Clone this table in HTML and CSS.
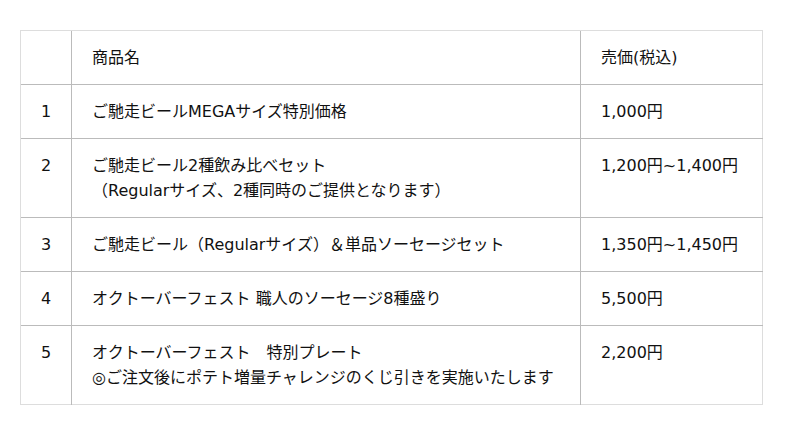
FILE: index.html
```html
<!DOCTYPE html>
<html lang="ja">
<head>
<meta charset="utf-8">
<link rel="stylesheet" href="styles.css">
</head>
<body>
<table class="menu">
  <colgroup>
    <col class="c-no">
    <col class="c-name">
    <col class="c-price">
  </colgroup>
  <tr>
    <td class="no"></td>
    <td>商品名</td>
    <td>売価(税込)</td>
  </tr>
  <tr>
    <td class="no">1</td>
    <td>ご馳走ビールMEGAサイズ特別価格</td>
    <td>1,000円</td>
  </tr>
  <tr>
    <td class="no">2</td>
    <td>ご馳走ビール2種飲み比べセット<br>（Regularサイズ、2種同時のご提供となります）</td>
    <td>1,200円~1,400円</td>
  </tr>
  <tr>
    <td class="no">3</td>
    <td>ご馳走ビール（Regularサイズ）＆単品ソーセージセット</td>
    <td>1,350円~1,450円</td>
  </tr>
  <tr>
    <td class="no">4</td>
    <td>オクトーバーフェスト 職人のソーセージ8種盛り</td>
    <td>5,500円</td>
  </tr>
  <tr>
    <td class="no">5</td>
    <td>オクトーバーフェスト　特別プレート<br>◎ご注文後にポテト増量チャレンジのくじ引きを実施いたします</td>
    <td>2,200円</td>
  </tr>
</table>
</body>
</html>
```
FILE: styles.css
```css
html, body {
  margin: 0;
  padding: 0;
  background: #fff;
}
body {
  padding: 30px 20px;
  font-family: "DejaVu Sans", "Noto Sans CJK JP", sans-serif;
  font-size: 16px;
  line-height: 25px;
  color: #111;
}
.menu {
  width: 742px;
  border-collapse: collapse;
  table-layout: fixed;
  border: 1px solid #ddd;
}
.c-no { width: 51px; }
.c-name { width: 509px; }
.c-price { width: 182px; }
.menu td {
  padding: 14px 20px;
  vertical-align: top;
  border-top: 1px solid #bbb;
  border-left: 1px solid #bbb;
  white-space: nowrap;
}
.menu tr:first-child td { border-top-color: #ddd; }
.menu td:first-child { border-left-color: #ddd; }
.menu td.no {
  padding-left: 0;
  padding-right: 0;
  text-align: center;
}
```
